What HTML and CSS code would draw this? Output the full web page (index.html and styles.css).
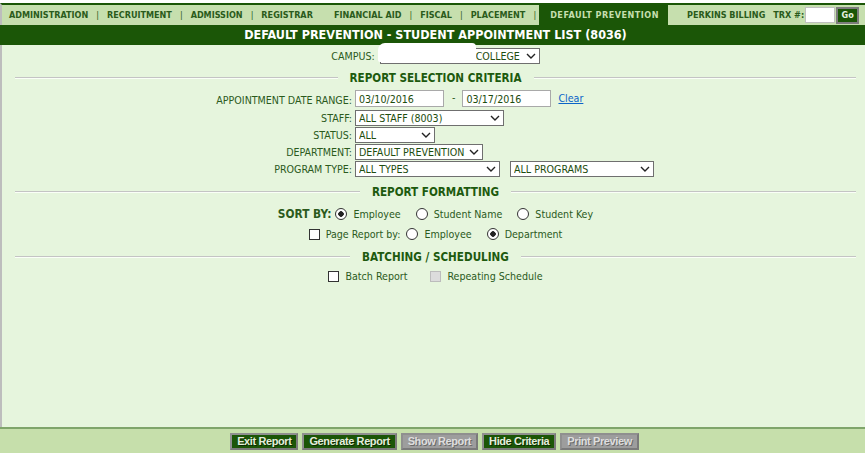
FILE: index.html
```html
<!DOCTYPE html>
<html lang="en">
<head>
    <meta charset="UTF-8">
    <title>Default Prevention - Student Appointment List</title>
    <link rel="stylesheet" href="styles.css">
</head>
<body>
    <div class="page">
        <div class="topnav">
            <span class="nav-item">ADMINISTRATION</span><span class="sep">|</span>
            <span class="nav-item">RECRUITMENT</span><span class="sep">|</span>
            <span class="nav-item">ADMISSION</span><span class="sep">|</span>
            <span class="nav-item">REGISTRAR</span>
            <span class="nav-item gap">FINANCIAL AID</span><span class="sep">|</span>
            <span class="nav-item">FISCAL</span><span class="sep">|</span>
            <span class="nav-item">PLACEMENT</span><span class="sep">|</span>
            <span class="nav-item active">DEFAULT PREVENTION</span>
            <span class="nav-item perkins">PERKINS BILLING</span>
            <span class="trx">TRX #:</span><input class="trx-input" type="text"><button class="go">Go</button>
        </div>

        <div class="titlebar">DEFAULT PREVENTION - STUDENT APPOINTMENT LIST (8036)</div>

        <div class="content">
            <div class="center-row campus">
                <label>CAMPUS:</label>
                <span class="select-wrap" style="width: 160px;">
                    <select class="sel"><option>COLLEGE</option></select>
                    <span class="redact"></span>
                    <svg class="chev" viewBox="0 0 10 6" width="10" height="6"><path d="M1 1 L5 5 L9 1" fill="none" stroke="#222" stroke-width="1.4"/></svg>
                </span>
            </div>

            <div class="section-head"><span>REPORT SELECTION CRITERIA</span></div>

            <div class="criteria">
                <label>APPOINTMENT DATE RANGE:</label>
                <div class="ctrls date-row">
                    <input class="date" type="text" value="03/10/2016">
                    <span class="dash">-</span>
                    <input class="date" type="text" value="03/17/2016">
                    <a href="#" class="clear">Clear</a>
                </div>

                <label>STAFF:</label>
                <div class="ctrls">
                    <span class="select-wrap" style="width: 149px;">
                        <select class="sel"><option>ALL STAFF (8003)</option></select>
                        <svg class="chev" viewBox="0 0 10 6" width="10" height="6"><path d="M1 1 L5 5 L9 1" fill="none" stroke="#222" stroke-width="1.4"/></svg>
                    </span>
                </div>

                <label>STATUS:</label>
                <div class="ctrls">
                    <span class="select-wrap" style="width: 80px;">
                        <select class="sel"><option>ALL</option></select>
                        <svg class="chev" viewBox="0 0 10 6" width="10" height="6"><path d="M1 1 L5 5 L9 1" fill="none" stroke="#222" stroke-width="1.4"/></svg>
                    </span>
                </div>

                <label>DEPARTMENT:</label>
                <div class="ctrls">
                    <span class="select-wrap" style="width: 128px;">
                        <select class="sel"><option>DEFAULT PREVENTION</option></select>
                        <svg class="chev" viewBox="0 0 10 6" width="10" height="6"><path d="M1 1 L5 5 L9 1" fill="none" stroke="#222" stroke-width="1.4"/></svg>
                    </span>
                </div>

                <label>PROGRAM TYPE:</label>
                <div class="ctrls">
                    <span class="select-wrap" style="width: 145px;">
                        <select class="sel"><option>ALL TYPES</option></select>
                        <svg class="chev" viewBox="0 0 10 6" width="10" height="6"><path d="M1 1 L5 5 L9 1" fill="none" stroke="#222" stroke-width="1.4"/></svg>
                    </span>
                    <span class="select-wrap second" style="width: 144px;">
                        <select class="sel"><option>ALL PROGRAMS</option></select>
                        <svg class="chev" viewBox="0 0 10 6" width="10" height="6"><path d="M1 1 L5 5 L9 1" fill="none" stroke="#222" stroke-width="1.4"/></svg>
                    </span>
                </div>
            </div>

            <div class="section-head"><span>REPORT FORMATTING</span></div>

            <div class="center-row sort">
                <b class="sort-label">SORT BY:</b>
                <label class="opt"><input type="radio" name="sort" checked> Employee</label>
                <label class="opt"><input type="radio" name="sort"> Student Name</label>
                <label class="opt"><input type="radio" name="sort"> Student Key</label>
            </div>
            <div class="center-row pageby">
                <label class="opt first"><input type="checkbox"> Page Report by:</label>
                <label class="opt"><input type="radio" name="pageby"> Employee</label>
                <label class="opt"><input type="radio" name="pageby" checked> Department</label>
            </div>

            <div class="section-head"><span>BATCHING / SCHEDULING</span></div>

            <div class="center-row batch">
                <label class="opt"><input type="checkbox"> Batch Report</label>
                <label class="opt"><input type="checkbox" disabled> Repeating Schedule</label>
            </div>
        </div>

        <div class="footer">
            <button class="btn">Exit Report</button>
            <button class="btn">Generate Report</button>
            <button class="btn" disabled>Show Report</button>
            <button class="btn">Hide Criteria</button>
            <button class="btn" disabled>Print Preview</button>
        </div>
    </div>
</body>
</html>
```

FILE: styles.css
```css
body {
    margin: 0;
    padding-top: 3px;
    background-color: #fff;
    font-family: "DejaVu Sans Condensed", "DejaVu Sans", sans-serif;
    font-size: 10.6px;
    color: #2b5a1c;
}

.page {
    height: 450px;
    display: flex;
    flex-direction: column;
    overflow: hidden;
}

/* top menu */
.topnav {
    display: flex;
    align-items: center;
    height: 20px;
    border-top: 2px solid #1b5607;
    border-left: 2px solid #bdbdbd;
    background-color: #c6dfae;
    padding-left: 7px;
    font-size: 9px;
    font-weight: bold;
    color: #2a5b1b;
    white-space: nowrap;
}

.sep {
    font-weight: normal;
    padding: 0 8px;
}

.nav-item.gap {
    margin-left: 21px;
}

.nav-item.active {
    align-self: stretch;
    display: flex;
    align-items: center;
    background-color: #1b5607;
    color: #c6dfae;
    letter-spacing: 0.5px;
    padding: 0 9px 0 11px;
    margin-left: -5px;
}

.nav-item.perkins {
    margin-left: 19px;
}

.trx {
    margin-left: 8px;
}

.trx-input {
    width: 30px;
    height: 16px;
    box-sizing: border-box;
    border: 1px solid #c0c0c0;
    margin: 0 0 0 1px;
    padding: 0;
}

.go {
    width: 23px;
    height: 17px;
    margin-left: 1px;
    padding: 0;
    background-color: #1b5607;
    border: 2px solid #7d7d7d;
    color: #e8f2e0;
    font-family: "DejaVu Sans Condensed", sans-serif;
    font-size: 9px;
    font-weight: bold;
}

.titlebar {
    height: 20px;
    line-height: 19px;
    background-color: #1b5607;
    color: #fff;
    font-size: 12.5px;
    font-weight: bold;
    text-align: center;
    padding-left: 6px;
}

/* main area */
.content {
    flex: 1;
    background-color: #e6f5dd;
    border-left: 2px solid #bdbdbd;
    padding: 0 9px 0 13px;
}

.center-row {
    display: flex;
    justify-content: center;
    align-items: center;
}

.campus {
    margin-top: 3px;
    height: 16px;
    gap: 5px;
}

.section-head {
    display: flex;
    align-items: center;
    gap: 12px;
    height: 14px;
    font-size: 11.6px;
    font-weight: bold;
    color: #1d5a0e;
}

.section-head::before,
.section-head::after {
    content: "";
    flex: 1;
    border-top: 1px solid #c4c4c4;
    border-bottom: 1px solid #fafff7;
}

.campus + .section-head {
    margin-top: 7px;
}

.criteria {
    display: grid;
    grid-template-columns: 337px auto;
    column-gap: 3px;
    row-gap: 1px;
    align-items: center;
    margin-top: 5px;
}

.criteria > label {
    text-align: right;
}

.ctrls {
    display: flex;
    align-items: center;
    height: 16px;
}

.ctrls.date-row {
    height: 19px;
    align-items: flex-start;
}

.date {
    width: 89px;
    height: 17px;
    box-sizing: border-box;
    border: 1px solid #a9a9a9;
    background-color: #fff;
    font-family: inherit;
    font-size: 10.6px;
    color: #1d4d0e;
    padding: 0 3px;
}

.dash {
    margin: 1px 7px 0 8px;
}

.clear {
    margin: 2px 0 0 7px;
    color: #0b64c8;
}

.select-wrap {
    position: relative;
    display: inline-block;
    height: 16px;
}

.select-wrap.second {
    margin-left: 10px;
}

.sel {
    appearance: none;
    width: 100%;
    height: 16px;
    box-sizing: border-box;
    border: 1px solid #6f6f6f;
    border-radius: 0;
    background-color: #fff;
    font-family: inherit;
    font-size: 10.6px;
    color: #1d4d0e;
    padding: 0 0 0 3px;
    margin: 0;
}

.campus .sel {
    padding-left: 95px;
}

.chev {
    position: absolute;
    right: 4px;
    top: 5px;
}

.redact {
    position: absolute;
    left: -2px;
    top: -5px;
    width: 98px;
    height: 19px;
    background-color: #fff;
    border-radius: 7px 4px 2px 2px;
}

.criteria + .section-head {
    margin-top: 8px;
}

.sort {
    margin-top: 7px;
    height: 16px;
    gap: 15px;
}

.sort-label {
    font-size: 11.8px;
    margin-right: -11px;
}

.pageby {
    margin-top: 4px;
    height: 16px;
    gap: 15px;
}

.pageby .first {
    margin-right: -9px;
}

.pageby + .section-head {
    margin-top: 8px;
}

.batch {
    margin-top: 4px;
    height: 16px;
    gap: 23px;
}

.opt {
    display: inline-flex;
    align-items: center;
    gap: 4px;
    color: #2b5a1c;
}

.opt input {
    appearance: none;
    width: 11px;
    height: 11px;
    margin: 0 2px 0 0;
    box-sizing: border-box;
    border: 1px solid #333;
    background-color: #fff;
}

.opt input[type="radio"] {
    border-radius: 50%;
    width: 12px;
    height: 12px;
}

.opt input[type="radio"]:checked {
    background: radial-gradient(circle, #222 0 2.5px, #fff 3px);
}

.opt input:disabled {
    background-color: #dcdcdc;
    border-color: #bcbcbc;
}

/* bottom bar */
.footer {
    height: 24px;
    border-top: 2px solid #7fa56a;
    background-color: #c6dfab;
    display: flex;
    justify-content: center;
    align-items: center;
    gap: 4px;
    padding-left: 4px;
}

.btn {
    height: 17px;
    padding: 0 5px;
    background-color: #1b5607;
    border: 2px solid #7a7a7a;
    border-top-color: #8f8f8f;
    border-left-color: #8f8f8f;
    color: #e4eedc;
    font-family: "Liberation Sans", Arial, sans-serif;
    font-size: 11px;
    font-weight: bold;
    letter-spacing: -0.4px;
    text-shadow: 1px 1px 0 #0a2a02;
}

.btn:disabled {
    background-color: #9d9d9d;
    color: #dedede;
    text-shadow: 1px 1px 0 #6a6a6a;
}
```
